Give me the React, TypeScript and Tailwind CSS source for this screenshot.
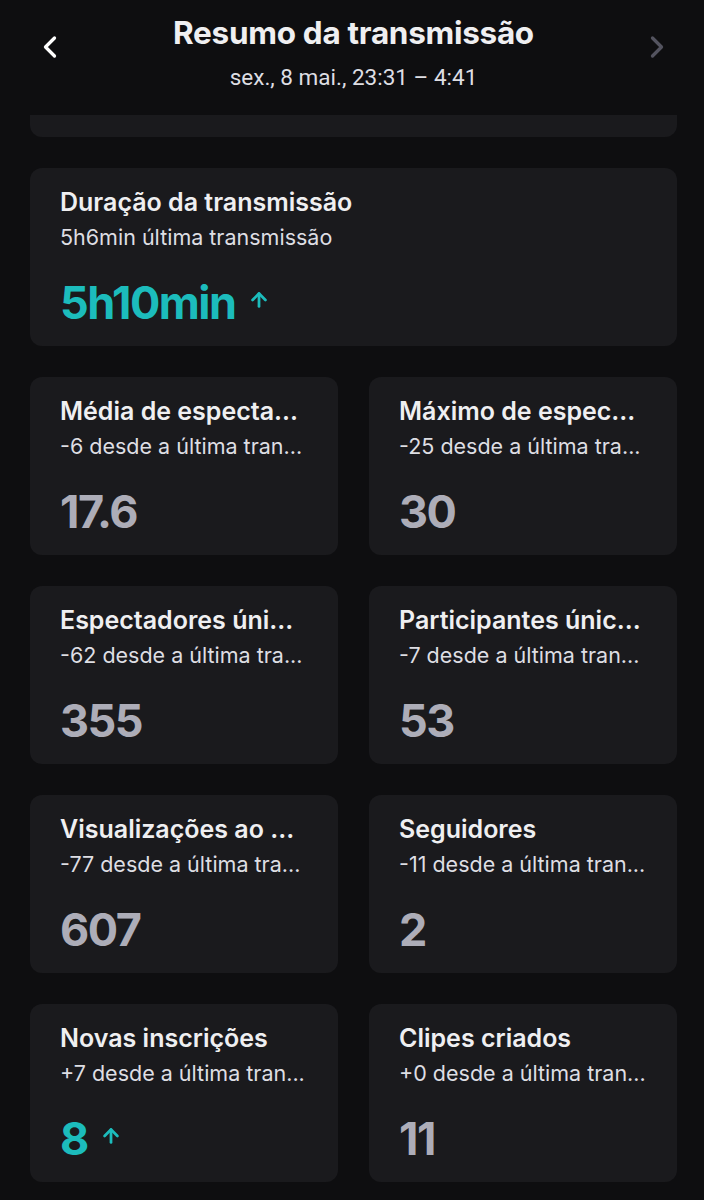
import { ChevronLeft, ChevronRight, ArrowUp } from "lucide-react";

type Stat = { titulo: string; subtitulo: string; valor: string; subiu?: boolean };

// textos já cortados como aparecem no app
const stats: Stat[] = [
  { titulo: "Média de especta...", subtitulo: "-6 desde a última tran...", valor: "17.6" },
  { titulo: "Máximo de espec...", subtitulo: "-25 desde a última tra...", valor: "30" },
  { titulo: "Espectadores úni...", subtitulo: "-62 desde a última tra...", valor: "355" },
  { titulo: "Participantes únic...", subtitulo: "-7 desde a última tran...", valor: "53" },
  { titulo: "Visualizações ao ...", subtitulo: "-77 desde a última tra...", valor: "607" },
  { titulo: "Seguidores", subtitulo: "-11 desde a última tran...", valor: "2" },
  { titulo: "Novas inscrições", subtitulo: "+7 desde a última tran...", valor: "8", subiu: true },
  { titulo: "Clipes criados", subtitulo: "+0 desde a última tran...", valor: "11" },
];

export default function App() {
  return (
    <div className="min-h-[1200px] w-[704px] bg-[#0e0e10] font-['Inter',sans-serif] text-[#efeff1]">
      <header className="flex h-[115px] items-start justify-between pl-[32px] pr-[29px] pt-[14px]">
        <ChevronLeft className="mt-[15px] h-[36px] w-[36px] text-white" strokeWidth={2.2} />
        <div className="flex flex-col items-center">
          <h1 className="text-[31.5px] font-bold leading-[38px] tracking-[-0.3px] text-[#efeff1]">
            Resumo da transmissão
          </h1>
          <p className="mt-[12px] font-['Roboto',sans-serif] text-[22.5px] leading-[26px] text-[#dedee3]">
            sex., 8 mai., 23:31 – 4:41
          </p>
        </div>
        <ChevronRight className="mt-[15px] h-[36px] w-[36px] text-[#53535f]" strokeWidth={2.2} />
      </header>

      <div className="pl-[30px] pr-[27px]">
        <div className="h-[22px] rounded-b-xl bg-[#1a1a1d]" />

        <div className="mt-[31px]">
          <Card
            titulo="Duração da transmissão"
            subtitulo="5h6min última transmissão"
            valor="5h10min"
            subiu
          />
        </div>

        <div className="mt-[31px] grid grid-cols-2 gap-x-[31px] gap-y-[31px]">
          {stats.map((s) => (
            <Card key={s.titulo} {...s} />
          ))}
        </div>
      </div>
    </div>
  );
}

function Card({ titulo, subtitulo, valor, subiu }: Stat) {
  return (
    <div className="h-[178px] rounded-xl bg-[#1a1a1d] pt-[19px] pl-[30px] pr-[20px]">
      <p className="whitespace-nowrap text-[25px] font-semibold leading-[30px] text-[#efeff1]">{titulo}</p>
      <p className="mt-[7px] whitespace-nowrap text-[21.5px] leading-[26px] text-[#dedee3]">{subtitulo}</p>
      <div className="mt-[28px] flex items-center gap-[12px]">
        <span
          className={`text-[45px] font-bold leading-[50px] tracking-[-1.5px] ${
            subiu ? "text-[#1cbcbc]" : "text-[#adadb8]"
          }`}
        >
          {valor}
        </span>
        {subiu && <ArrowUp className="mb-[6px] h-[22px] w-[22px] text-[#1cbcbc]" strokeWidth={3} />}
      </div>
    </div>
  );
}
